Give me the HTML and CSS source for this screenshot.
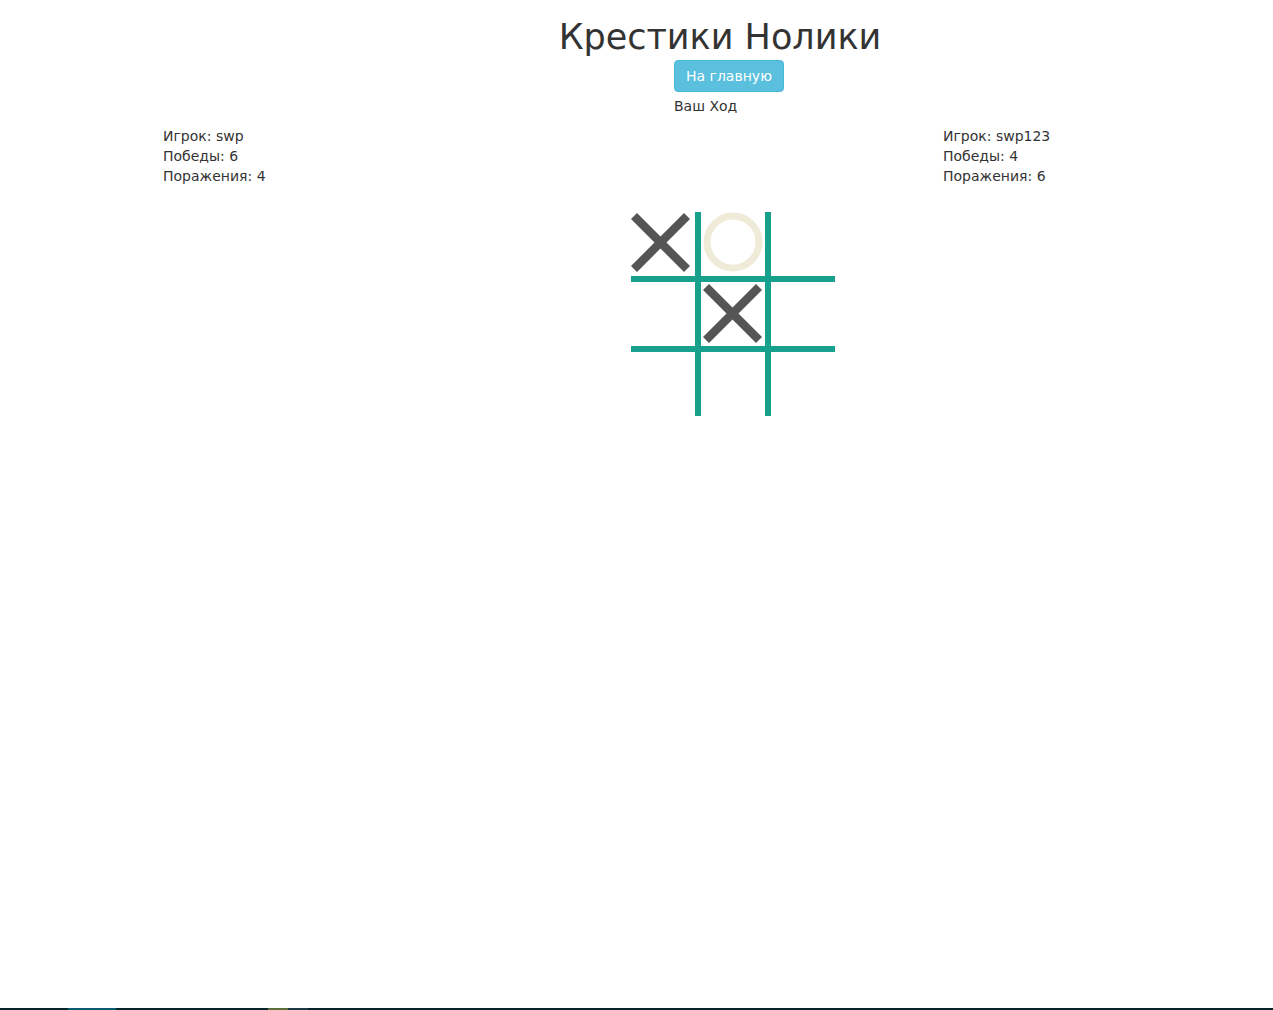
FILE: index.html
```html
<!DOCTYPE html>
<html lang="ru">
<head>
<meta charset="utf-8">
<title>Крестики Нолики</title>
<link rel="stylesheet" href="styles.css">
</head>
<body>
<div class="page">
  <main class="main">
    <h1 class="title">Крестики Нолики</h1>
    <div class="actions">
      <button class="btn-info" type="button">На главную</button>
      <div class="turn">Ваш Ход</div>
    </div>
    <div class="players">
      <div class="player player-left">
        <div>Игрок: swp</div>
        <div>Победы: 6</div>
        <div>Поражения: 4</div>
      </div>
      <div class="player player-right">
        <div>Игрок: swp123</div>
        <div>Победы: 4</div>
        <div>Поражения: 6</div>
      </div>
    </div>
    <div class="board">
      <div class="cell c1"><svg class="mark mark-x1" viewBox="0 0 64 64"><line x1="5" y1="5" x2="58" y2="58"/><line x1="58" y1="5" x2="5" y2="58"/></svg></div>
      <div class="vline"></div>
      <div class="cell"><svg class="mark" viewBox="0 0 64 64"><circle class="o" cx="32" cy="30" r="26"/></svg></div>
      <div class="vline"></div>
      <div class="cell"></div>
      <div class="hline"></div>
      <div class="cell"></div>
      <div class="vline"></div>
      <div class="cell"><svg class="mark" viewBox="0 0 64 64"><line x1="5" y1="5" x2="58" y2="58"/><line x1="58" y1="5" x2="5" y2="58"/></svg></div>
      <div class="vline"></div>
      <div class="cell"></div>
      <div class="hline"></div>
      <div class="cell"></div>
      <div class="vline"></div>
      <div class="cell"></div>
      <div class="vline"></div>
      <div class="cell"></div>
    </div>
  </main>
  <footer class="taskbar">
    <span class="seg seg-dark1"></span>
    <span class="seg seg-blue"></span>
    <span class="seg seg-dark2"></span>
    <span class="seg seg-olive"></span>
    <span class="seg seg-slate"></span>
    <span class="seg seg-rest"></span>
  </footer>
</div>
</body>
</html>
```

FILE: styles.css
```css
html, body {
  margin: 0;
  padding: 0;
  background: #fff;
}

body {
  font-family: "DejaVu Sans", Verdana, sans-serif;
  font-size: 14px;
  line-height: 20px;
  color: #333;
}

.page {
  min-height: 1010px;
  display: flex;
  flex-direction: column;
}

.main {
  flex: 1;
  display: flex;
  flex-direction: column;
  align-items: flex-start;
}

.title {
  margin: 17px 0 0 520px;
  width: 400px;
  text-align: center;
  font-size: 35px;
  line-height: 40px;
  font-weight: 500;
  white-space: nowrap;
  color: #333;
}

.actions {
  margin: 3px 0 0 674px;
  display: flex;
  flex-direction: column;
  align-items: flex-start;
}

.btn-info {
  font-family: "DejaVu Sans", Verdana, sans-serif;
  font-size: 14px;
  line-height: 19px;
  color: #fff;
  background: #5bc0de;
  border: 1px solid #46b8da;
  border-radius: 4px;
  padding: 6px 11px 5px;
  white-space: nowrap;
  cursor: pointer;
}

.turn {
  margin-top: 4px;
}

.players {
  margin: 10px 0 0 163px;
  width: 900px;
  display: flex;
  justify-content: space-between;
}

.player-right {
  width: 120px;
}

.board {
  margin: 26px 0 0 631px;
  display: grid;
  grid-template-columns: 64px 6px 64px 6px 64px;
  grid-template-rows: 64px 6px 64px 6px 64px;
}

.cell {
  width: 64px;
  height: 64px;
  position: relative;
}

.vline {
  background: #17a08c;
}

.board .hline {
  grid-column: 1 / -1;
  background: #17a08c;
}

.mark {
  display: block;
  width: 64px;
  height: 64px;
  overflow: visible;
}

.mark line {
  stroke: #555;
  stroke-width: 8.5;
  stroke-linecap: butt;
}

.mark-x1 {
  transform: translate(-2px, -1px);
}

.mark .o {
  fill: none;
  stroke: #f0ebd8;
  stroke-width: 7;
}

.taskbar {
  height: 2px;
  display: flex;
  background: #05262b;
}

.seg {
  display: block;
  height: 2px;
}

.seg-dark1 { width: 68px; background: #05262b; }
.seg-blue { width: 48px; background: #0b5a6e; }
.seg-dark2 { width: 152px; background: #05262b; }
.seg-olive { width: 20px; background: #5a6e3a; }
.seg-slate { width: 20px; background: #1e3a48; }
.seg-rest { flex: 1; background: #05262b; }
```
